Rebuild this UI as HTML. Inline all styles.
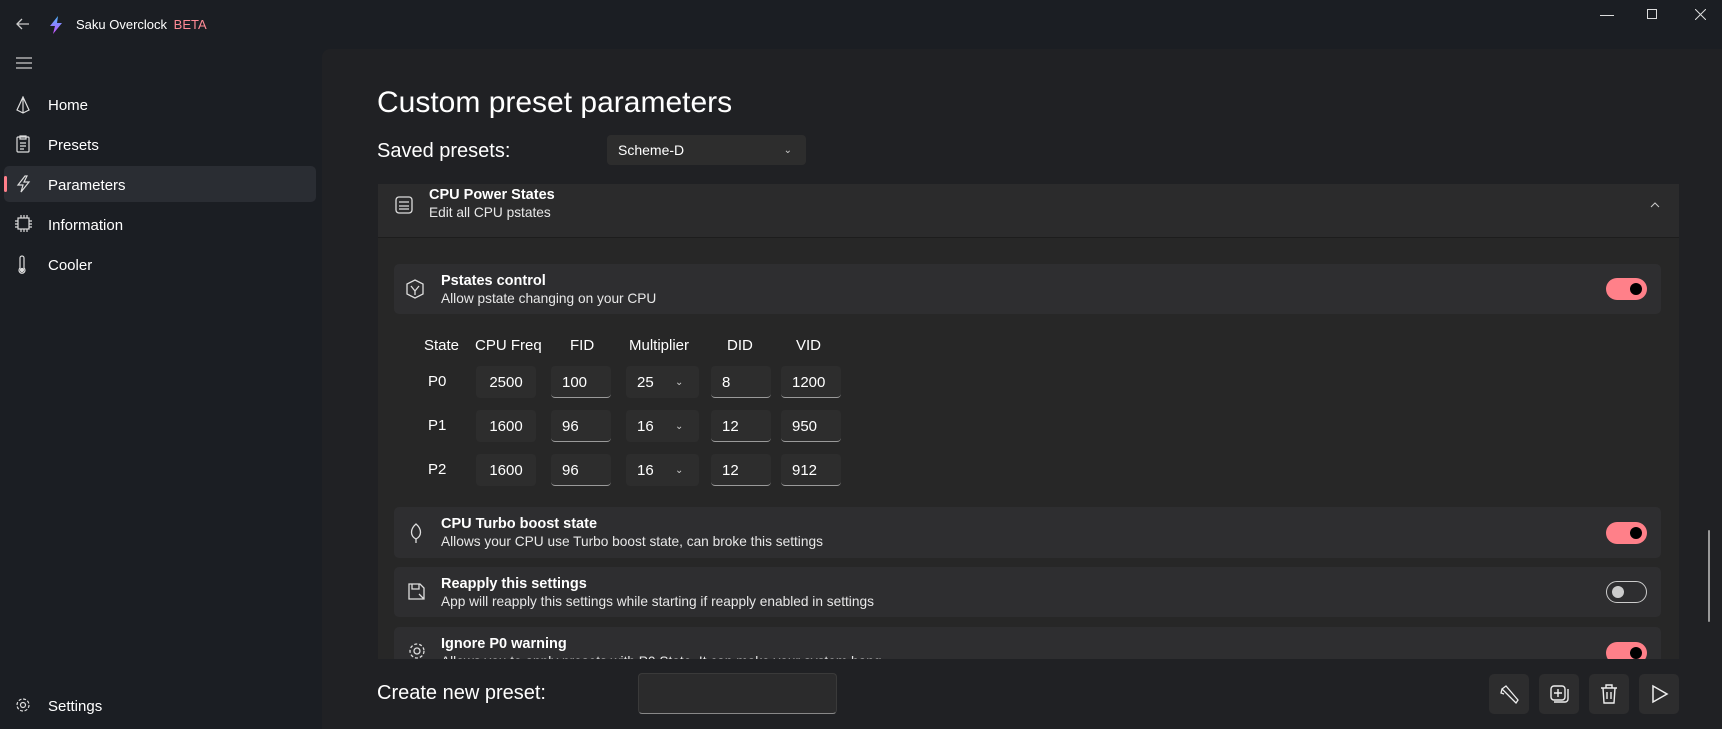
<!DOCTYPE html>
<html><head><meta charset="utf-8"><style>
*{margin:0;padding:0;box-sizing:border-box}
body{width:1722px;height:729px;overflow:hidden;background:#1b1e23;font-family:"Segoe UI","Liberation Sans",sans-serif;color:#fff;position:relative}
.a{position:absolute}
.nav{position:absolute;left:48px;font-size:15px;color:#fff}
.panel{position:absolute;left:322px;top:49px;right:0;bottom:0;background:#202124;border-top-left-radius:8px}
.box{position:absolute;background:#2d2d2d;border-radius:4px;font-size:15px;padding-left:11px;line-height:34px;height:32px}
.ul{border-bottom:1px solid #9a9a9a}
.card{position:absolute;left:394px;width:1267px;background:#2e2e30;border-radius:5px;overflow:hidden}
.t1{position:absolute;left:47px;font-size:14.5px;font-weight:bold}
.t2{position:absolute;left:47px;font-size:13.7px;color:#e8e8e8}
.tog{position:absolute;left:1212px;width:41px;height:22px;border-radius:11px;background:#ff8089}
.tog::after{content:"";position:absolute;right:5px;top:5px;width:12px;height:12px;border-radius:50%;background:#000}
.off{background:transparent;border:1px solid #ccc}
.off::after{left:5px;right:auto;top:4px;background:#ccc}
.h{position:absolute;top:337px;font-size:15px}
.btn{position:absolute;top:674px;width:40px;height:40px;background:#2d2d2e;border-radius:5px}
</style></head><body>
<svg class="a" style="left:15px;top:16px" width="16" height="16" viewBox="0 0 16 16" fill="none" stroke="#ccc" stroke-width="1.3"><path d="M14 8H2M7 3L2 8l5 5"/></svg>
<svg class="a" style="left:49px;top:16px" width="14" height="18" viewBox="0 0 14 18"><defs><linearGradient id="g" x1="0" y1="0" x2="0" y2="1"><stop offset="0" stop-color="#4ab8ff"/><stop offset="1" stop-color="#d04cff"/></linearGradient></defs><path d="M9 0L1 10h5l-2 8 9-11H8z" fill="url(#g)"/></svg>
<div class="a" style="left:76px;top:17px;font-size:13px">Saku Overclock <span style="color:#ff8a95;margin-left:3px">BETA</span></div>
<div class="a" style="left:1600px;top:15px;width:14px;border-top:1px solid #ddd"></div>
<div class="a" style="left:1647px;top:9px;width:10px;height:10px;border:1px solid #ddd"></div>
<svg class="a" style="left:1695px;top:9px" width="11" height="11" stroke="#ddd"><path d="M0 0L11 11M11 0L0 11"/></svg>
<svg class="a" style="left:16px;top:56px" width="16" height="14" stroke="#ccc" stroke-width="1.2"><path d="M0 2h16M0 7h16M0 12h16"/></svg>
<div class="a" style="left:4px;top:166px;width:312px;height:36px;background:#2a2d33;border-radius:5px"></div>
<div class="a" style="left:4px;top:176px;width:3px;height:16px;background:#ff7f8a;border-radius:2px"></div>
<svg class="a" style="left:15px;top:96px" width="16" height="18" fill="none" stroke="#ddd" stroke-width="1.2"><path d="M8 1L2 14l6 3 6-3z M8 1v16"/></svg>
<div class="nav" style="top:97px">Home</div>
<svg class="a" style="left:16px;top:135px" width="14" height="18" fill="none" stroke="#ddd" stroke-width="1.2"><rect x="1" y="2" width="12" height="15" rx="1"/><path d="M4 1h6v3H4zM4 8h6M4 11h6M4 14h4"/></svg>
<div class="nav" style="top:137px">Presets</div>
<svg class="a" style="left:15px;top:175px" width="16" height="18" fill="none" stroke="#ddd" stroke-width="1.2"><path d="M10 1L3 10h5l-2 7 8-10H9l3-6z"/></svg>
<div class="nav" style="top:177px">Parameters</div>
<svg class="a" style="left:15px;top:215px" width="17" height="17" fill="none" stroke="#ddd" stroke-width="1.2"><rect x="3" y="3" width="11" height="11"/><path d="M6 0v3M9 0v3M12 0v3M6 14v3M9 14v3M12 14v3M0 6h3M0 9h3M0 12h3M14 6h3M14 9h3M14 12h3"/></svg>
<div class="nav" style="top:217px">Information</div>
<svg class="a" style="left:17px;top:255px" width="10" height="19" fill="none" stroke="#ddd" stroke-width="1.2"><path d="M3 13V3a2 2 0 014 0v10a3 3 0 11-4 0z"/><circle cx="5" cy="15" r="1.5" fill="#ddd"/></svg>
<div class="nav" style="top:257px">Cooler</div>
<svg class="a" style="left:15px;top:697px" width="16" height="16" fill="none" stroke="#ddd" stroke-width="1.2"><circle cx="8" cy="8" r="2.5"/><circle cx="8" cy="8" r="6" stroke-dasharray="3 1.7"/></svg>
<div class="nav" style="top:698px">Settings</div>

<div class="panel"></div>
<div class="a" style="left:377px;top:86px;font-size:30px">Custom preset parameters</div>
<div class="a" style="left:377px;top:140px;font-size:20px">Saved presets:</div>
<div class="box" style="left:607px;top:135px;width:199px;height:30px;line-height:31px;font-size:14px">Scheme-D<span style="position:absolute;right:14px;font-size:10px;color:#ccc">&#8964;</span></div>

<div class="a" style="left:378px;top:184px;width:1301px;height:53px;background:#2b2b2c"></div>
<div class="a" style="left:378px;top:237px;width:1301px;height:422px;background:#272727;border-top:1px solid #1d1d1d"></div>
<svg class="a" style="left:395px;top:196px" width="18" height="18" fill="none" stroke="#ddd" stroke-width="1.3"><rect x="1" y="1" width="16" height="16" rx="3"/><path d="M4 6h10M4 10h10M4 13h10"/></svg>
<div class="a" style="left:429px;top:187px;font-size:14.5px;font-weight:bold">CPU Power States</div>
<div class="a" style="left:429px;top:205px;font-size:13.7px;color:#e8e8e8">Edit all CPU pstates</div>
<svg class="a" style="left:1650px;top:202px" width="10" height="6" fill="none" stroke="#ccc"><path d="M1 5l4-4 4 4"/></svg>

<div class="card" style="top:264px;height:50px"><svg class="a" style="left:11px;top:15px" width="20" height="20" fill="none" stroke="#ddd" stroke-width="1.3"><path d="M10 1l8 4v10l-8 4-8-4V5z M6 7l4 5 4-5M10 12v4"/></svg><div class="t1" style="top:9px">Pstates control</div><div class="t2" style="top:27px">Allow pstate changing on your CPU</div><div class="tog" style="top:14px"></div></div>

<div class="h" style="left:424px">State</div><div class="h" style="left:475px">CPU Freq</div><div class="h" style="left:570px">FID</div><div class="h" style="left:629px">Multiplier</div><div class="h" style="left:727px">DID</div><div class="h" style="left:796px">VID</div>

<div class="a" style="left:428px;top:373px;font-size:15px">P0</div>
<div class="a" style="left:428px;top:417px;font-size:15px">P1</div>
<div class="a" style="left:428px;top:461px;font-size:15px">P2</div>

<div class="box" style="left:476px;top:366px;width:60px;text-align:center;padding:0">2500</div>
<div class="box ul" style="left:551px;top:366px;width:60px">100</div>
<div class="box" style="left:626px;top:366px;width:73px">25<span style="position:absolute;left:49px;font-size:10px;color:#ccc">&#8964;</span></div>
<div class="box ul" style="left:711px;top:366px;width:60px">8</div>
<div class="box ul" style="left:781px;top:366px;width:60px">1200</div>

<div class="box" style="left:476px;top:410px;width:60px;text-align:center;padding:0">1600</div>
<div class="box ul" style="left:551px;top:410px;width:60px">96</div>
<div class="box" style="left:626px;top:410px;width:73px">16<span style="position:absolute;left:49px;font-size:10px;color:#ccc">&#8964;</span></div>
<div class="box ul" style="left:711px;top:410px;width:60px">12</div>
<div class="box ul" style="left:781px;top:410px;width:60px">950</div>

<div class="box" style="left:476px;top:454px;width:60px;text-align:center;padding:0">1600</div>
<div class="box ul" style="left:551px;top:454px;width:60px">96</div>
<div class="box" style="left:626px;top:454px;width:73px">16<span style="position:absolute;left:49px;font-size:10px;color:#ccc">&#8964;</span></div>
<div class="box ul" style="left:711px;top:454px;width:60px">12</div>
<div class="box ul" style="left:781px;top:454px;width:60px">912</div>

<div class="card" style="top:507px;height:51px"><svg class="a" style="left:13px;top:16px" width="18" height="20" fill="none" stroke="#ddd" stroke-width="1.3"><path d="M9 1C3 6 3 13 9 16c6-3 6-10 0-15zM9 16v4"/></svg><div class="t1" style="top:9px">CPU Turbo boost state</div><div class="t2" style="top:27px">Allows your CPU use Turbo boost state, can broke this settings</div><div class="tog" style="top:15px"></div></div>

<div class="card" style="top:567px;height:50px"><svg class="a" style="left:13px;top:15px" width="20" height="20" fill="none" stroke="#ddd" stroke-width="1.3"><path d="M2 2h11l4 4v11H2z M5 2v5h7V2M12 12l5 5"/></svg><div class="t1" style="top:9px">Reapply this settings</div><div class="t2" style="top:27px">App will reapply this settings while starting if reapply enabled in settings</div><div class="tog off" style="top:14px"></div></div>

<div class="card" style="top:627px;height:50px"><svg class="a" style="left:13px;top:14px" width="20" height="20" fill="none" stroke="#ddd" stroke-width="1.3"><circle cx="10" cy="10" r="7" stroke-dasharray="3 2"/><circle cx="10" cy="10" r="3"/></svg><div class="t1" style="top:9px">Ignore P0 warning</div><div class="t2" style="top:27px">Allows you to apply presets with P0 State. It can make your system hang</div><div class="tog" style="top:15px"></div></div>

<div class="a" style="left:322px;top:659px;width:1400px;height:70px;background:#202124"></div>
<div class="a" style="left:1708px;top:530px;width:2px;height:92px;background:#999;border-radius:1px"></div>
<div class="a" style="left:377px;top:682px;font-size:20px">Create new preset:</div>
<div class="a" style="left:638px;top:673px;width:199px;height:41px;background:#2b2b2c;border:1px solid #3a3a3a;border-bottom-color:#888;border-radius:4px"></div>
<div class="btn" style="left:1489px"><svg class="a" style="left:10px;top:10px" width="20" height="20" fill="none" stroke="#eee" stroke-width="1.3"><path d="M3 5l4-3 12 14-2 3zM3 5l-1 4 3 1"/></svg></div>
<div class="btn" style="left:1539px"><svg class="a" style="left:10px;top:10px" width="20" height="20" fill="none" stroke="#eee" stroke-width="1.4"><rect x="2" y="2" width="14" height="14" rx="3"/><path d="M9 5v8M5 9h8M5 18h11a3 3 0 003-3V5"/></svg></div>
<div class="btn" style="left:1589px"><svg class="a" style="left:10px;top:9px" width="20" height="22" fill="none" stroke="#eee" stroke-width="1.4"><path d="M2 5h16M7 5V2h6v3M4 5l1 15h10l1-15M8 9v7M12 9v7"/></svg></div>
<div class="btn" style="left:1639px"><svg class="a" style="left:11px;top:10px" width="20" height="20" fill="none" stroke="#eee" stroke-width="1.5"><path d="M3 2l14 8-14 8z"/></svg></div>
</body></html>
